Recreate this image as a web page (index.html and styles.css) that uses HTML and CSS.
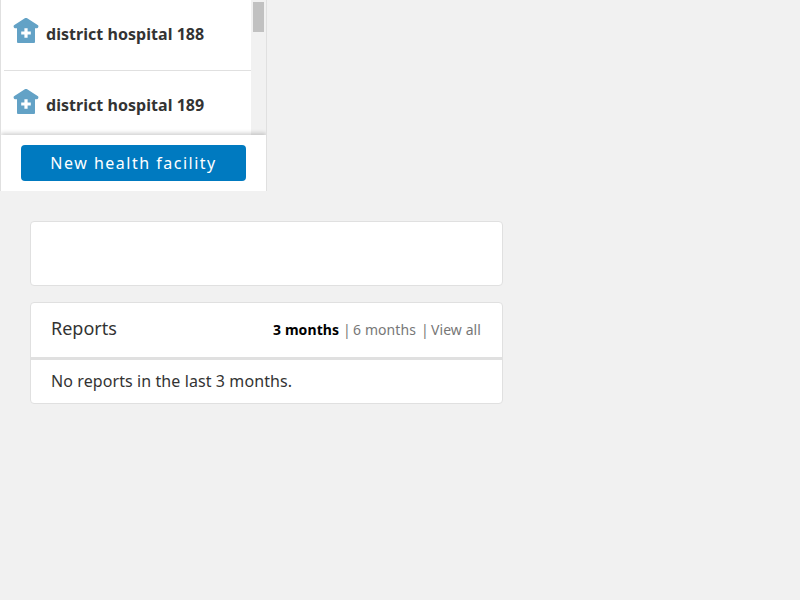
FILE: index.html
```html
<!DOCTYPE html>
<html lang="en">
<head>
<meta charset="utf-8">
<title>Health facilities</title>
<link rel="stylesheet" href="styles.css">
</head>
<body>
<svg class="defs" width="0" height="0" aria-hidden="true">
  <symbol id="facility" viewBox="0 0 26 26">
    <path fill="#63a2c6" fill-rule="evenodd" d="M11.800.3Q13-.5 14.200.3L25 7.300Q25.700 8 25.200 9.300Q24.800 10.200 24 10.200H22V24Q22 25 21 25H5Q4 25 4 24V10.200H2Q1.200 10.200.800 9.300Q.300 8 1 7.300ZM11.400 10.200V13.400H8.200V16.600H11.400V19.800H14.600V16.600H17.800V13.400H14.600V10.200Z"/>
  </symbol>
</svg>
<aside class="panel">
  <div class="scroller">
    <ul class="list">
      <li class="row"><svg class="icon"><use href="#facility"/></svg><span>district hospital 188</span></li>
      <li class="row"><svg class="icon"><use href="#facility"/></svg><span>district hospital 189</span></li>
    </ul>
    <div class="track"><div class="thumb"></div></div>
  </div>
  <div class="actions"><button class="button">New health facility</button></div>
</aside>
<main class="content">
  <section class="card summary"></section>
  <section class="card">
    <header class="card-head">
      <h2>Reports</h2>
      <nav class="filters"><a class="selected">3 months</a><span class="bar">|</span><a class="six">6 months</a><span class="bar">|</span><a>View all</a></nav>
    </header>
    <p class="empty">No reports in the last 3 months.</p>
  </section>
</main>
</body>
</html>
```

FILE: styles.css
```css
* { box-sizing: border-box; }
body {
  margin: 0;
  background: #f1f1f1;
  color: #333;
  font: 16px/22px "Noto Sans", sans-serif;
}
.defs { display: block; }
.panel {
  width: 267px;
  height: 191px;
  background: #fff;
  border: solid #e0e0e0;
  border-width: 0 1px;
}
.scroller { display: flex; height: 135px; overflow: hidden; }
.list { flex: 1; margin: 0; padding: 0 0 0 3px; list-style: none; }
.row {
  display: flex;
  height: 71px;
  padding: 18px 0 0 9px;
  border-bottom: 1px solid #e0e0e0;
  font-weight: 700;
  letter-spacing: .04px;
}
.row span { margin: 5px 0 0 7px; }
.icon { width: 26px; height: 26px; }
.track { width: 15px; padding: 2px; background: #f1f1f1; }
.thumb { width: 11px; height: 30px; background: #c1c1c1; }
.actions {
  position: relative;
  height: 56px;
  padding: 10px 20px;
  background: #fff;
  box-shadow: 0 -2px 4px rgba(0, 0, 0, .18);
  clip-path: inset(-6px 0 0 0);
}
.button {
  display: block;
  width: 225px;
  height: 36px;
  padding: 0;
  border: 0;
  border-radius: 4px;
  background: #007ac0;
  color: #fff;
  font: inherit;
  letter-spacing: 1.5px;
}
.content { width: 473px; margin: 30px 0 0 30px; }
.card {
  margin-bottom: 16px;
  background: #fff;
  border: 1px solid #e0e0e0;
  border-radius: 4px;
}
.summary { height: 65px; }
.card-head {
  display: flex;
  justify-content: space-between;
  height: 57px;
  padding: 13px 21px 0 20px;
  border-bottom: 3px solid #e0e0e0;
}
h2 { margin: 0; font-size: 18px; line-height: 24px; font-weight: 400; }
.filters {
  display: flex;
  margin-top: 1px;
  color: #777;
  font-size: 14px;
  line-height: 26px;
  letter-spacing: .08px;
}
.selected { color: #000; font-weight: 700; }
.bar { width: 9px; margin-left: 4px; }
.six { margin-right: 1px; }
.bar + a { margin-left: 1px; }
.empty { margin: 0; padding: 10px 20px 11px; letter-spacing: .09px; }
```
